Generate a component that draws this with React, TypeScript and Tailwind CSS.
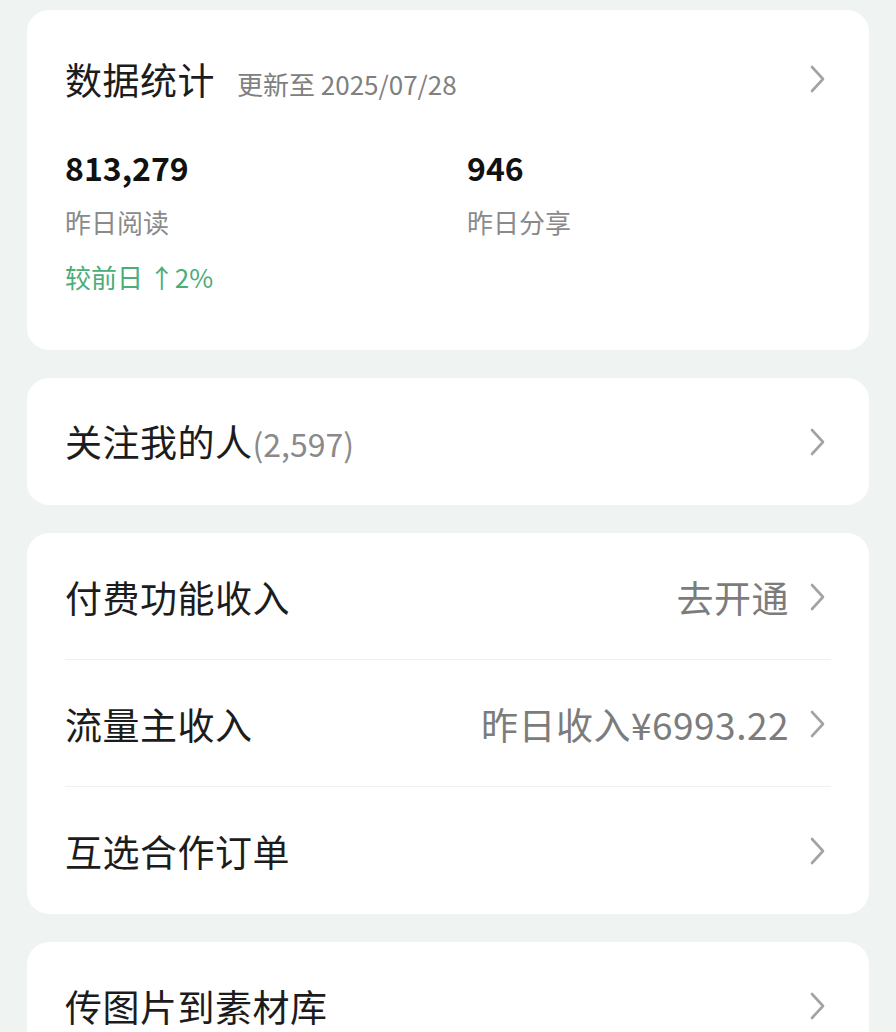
import React from "react";

const font = {
  fontFamily: '"Noto Sans CJK SC", "Noto Sans", sans-serif',
};

const Chevron = () => (
  <svg width="20" height="30" viewBox="0 0 20 30" className="shrink-0">
    <polyline
      points="5,3 16,15 5,27"
      fill="none"
      stroke="#a3a3a3"
      strokeWidth="2.6"
      strokeLinecap="round"
      strokeLinejoin="round"
    />
  </svg>
);

type RowProps = {
  title: string;
  extra?: string;
  note?: string;
  divider?: boolean;
};

const Row = ({ title, extra, note, divider }: RowProps) => (
  <div className="relative flex h-[127px] items-center justify-between pl-[38px] pr-[42px]">
    <div className="flex items-baseline text-[37px] leading-[48px] tracking-[0.5px] text-[#1c1c1c]">
      {title}
      {extra && <span className="text-[32px] tracking-normal text-[#8a8a8a]">{extra}</span>}
    </div>
    <div className="flex items-center gap-[18px]">
      {note && (
        <span className="text-[37px] leading-[48px] tracking-[0.5px] text-[#7c7c7c]">{note}</span>
      )}
      <Chevron />
    </div>
    {divider && (
      <div className="absolute bottom-0 left-[38px] right-[38px] h-px bg-[#f0f0f0]" />
    )}
  </div>
);

export default function App() {
  return (
    <div
      className="min-h-[1032px] w-[896px] bg-[#eff3f1] px-[27px] pt-[10px]"
      style={font}
    >
      <div className="flex flex-col gap-[28px]">
        <div className="rounded-[22px] bg-white pb-[56px] pl-[38px] pr-[42px] pt-[45px]">
          <div className="flex items-center justify-between">
            <div className="flex items-baseline gap-[22px]">
              <span className="text-[37px] leading-[48px] tracking-[0.5px] text-[#1c1c1c]">
                数据统计
              </span>
              <span className="text-[26px] leading-[34px] text-[#808080]">
                更新至 2025/07/28
              </span>
            </div>
            <Chevron />
          </div>
          <div className="mt-[44px] grid grid-cols-[402px_1fr]">
            <div>
              <div className="text-[32px] font-bold leading-[40px] text-[#111]">813,279</div>
              <div className="mt-[18px] text-[26px] leading-[34px] text-[#8a8a8a]">昨日阅读</div>
              <div className="mt-[21px] text-[26px] leading-[34px] text-[#4bad78]">
                较前日 ↑2%
              </div>
            </div>
            <div>
              <div className="text-[32px] font-bold leading-[40px] text-[#111]">946</div>
              <div className="mt-[18px] text-[26px] leading-[34px] text-[#8a8a8a]">昨日分享</div>
            </div>
          </div>
        </div>

        <div className="rounded-[22px] bg-white">
          <Row title="关注我的人" extra="(2,597)" />
        </div>

        <div className="rounded-[22px] bg-white">
          <Row title="付费功能收入" note="去开通" divider />
          <Row title="流量主收入" note="昨日收入¥6993.22" divider />
          <Row title="互选合作订单" />
        </div>

        <div className="rounded-[22px] bg-white">
          <Row title="传图片到素材库" />
        </div>
      </div>
    </div>
  );
}
